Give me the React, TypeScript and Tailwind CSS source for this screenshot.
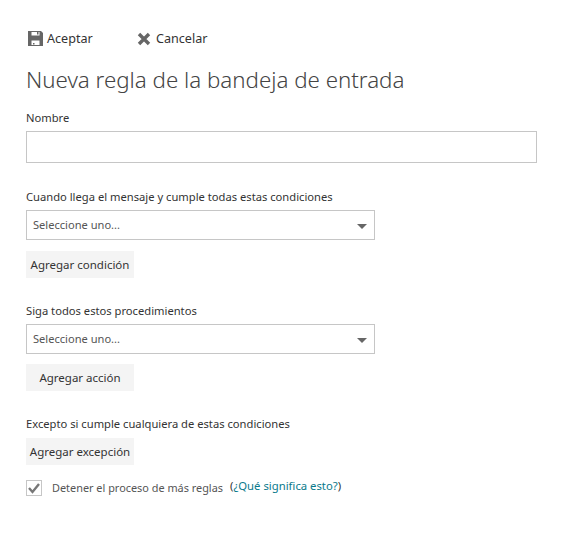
const font = "[font-family:'Noto_Sans','Open_Sans',sans-serif]";

function SaveIcon() {
  return (
    <svg width="15" height="15" viewBox="0 0 15 15" className="shrink-0">
      <path fill="#666" fillRule="evenodd" d="M0 0h13l2 2v13H0z M3.500 1v3.500h8V1z M3.500 9.500V14h8V9.500z" />
      <rect x="9" y="1" width="1.500" height="2.500" fill="#666" />
      <rect x="5" y="12" width="1.500" height="1.500" fill="#666" />
    </svg>
  );
}

function CloseIcon() {
  return (
    <svg width="14" height="14" viewBox="0 0 14 14" className="shrink-0">
      <path d="M2 2l10 10M12 2L2 12" stroke="#666" strokeWidth="3.400" fill="none" />
    </svg>
  );
}

function Select() {
  return (
    <div className="flex h-[30px] w-[349px] items-center justify-between border border-[#c6c6c6] bg-white pl-[6px] pr-[7px] text-[11.100px] text-[#555]">
      <span>Seleccione uno...</span>
      <span className="mt-[3px] h-0 w-0 border-x-[5px] border-t-[5px] border-x-transparent border-t-[#666]" />
    </div>
  );
}

function AddButton({ label }: { label: string }) {
  return (
    <div className="flex h-[27px] w-[108px] items-center justify-center bg-[#f4f4f4] text-[11.500px] text-[#333]">
      {label}
    </div>
  );
}

export default function App() {
  return (
    <div className={`${font} h-[538px] w-[573px] overflow-hidden bg-white pl-[26px] pt-[29px] text-[#333]`}>
      <div className="flex h-[20px] items-center pl-[2px] text-[12.600px]">
        <div className="flex w-[109px] items-center gap-[4px]">
          <SaveIcon />
          <span>Aceptar</span>
        </div>
        <div className="flex items-center gap-[5px]">
          <CloseIcon />
          <span>Cancelar</span>
        </div>
      </div>
      <h1 className="mt-[16px] text-[22.300px] font-light leading-[30px] text-[#444]">Nueva regla de la bandeja de entrada</h1>

      <div className="mt-[14px] text-[11.200px] leading-[18px]">Nombre</div>
      <div className="mt-[4px] h-[32px] w-[511px] border border-[#c6c6c6] bg-white" />

      <div className="mt-[25px] text-[11.200px] leading-[18px]">Cuando llega el mensaje y cumple todas estas condiciones</div>
      <div className="mt-[4px]"><Select /></div>
      <div className="mt-[11px]"><AddButton label="Agregar condición" /></div>

      <div className="mt-[24px] text-[11.200px] leading-[18px]">Siga todos estos procedimientos</div>
      <div className="mt-[4px]"><Select /></div>
      <div className="mt-[10px]"><AddButton label="Agregar acción" /></div>

      <div className="mt-[24px] text-[11.200px] leading-[18px]">Excepto si cumple cualquiera de estas condiciones</div>
      <div className="mt-[5px]"><AddButton label="Agregar excepción" /></div>

      <div className="mt-[15px] flex items-center">
        <span className="flex h-[16px] w-[16px] items-center justify-center border border-[#c6c6c6]">
          <svg width="14" height="14" viewBox="0 0 14 14"><path d="M2 7l3.500 4L12 3" stroke="#777" strokeWidth="2.400" fill="none" /></svg>
        </span>
        <span className="ml-[10px] text-[10.900px] text-[#555]">Detener el proceso de más reglas</span>
        <span className="ml-[7px] -translate-y-[2px] text-[11.300px] text-[#333]">(<span className="text-[#0a7a8c]">¿Qué significa esto?</span>)</span>
      </div>
    </div>
  );
}
